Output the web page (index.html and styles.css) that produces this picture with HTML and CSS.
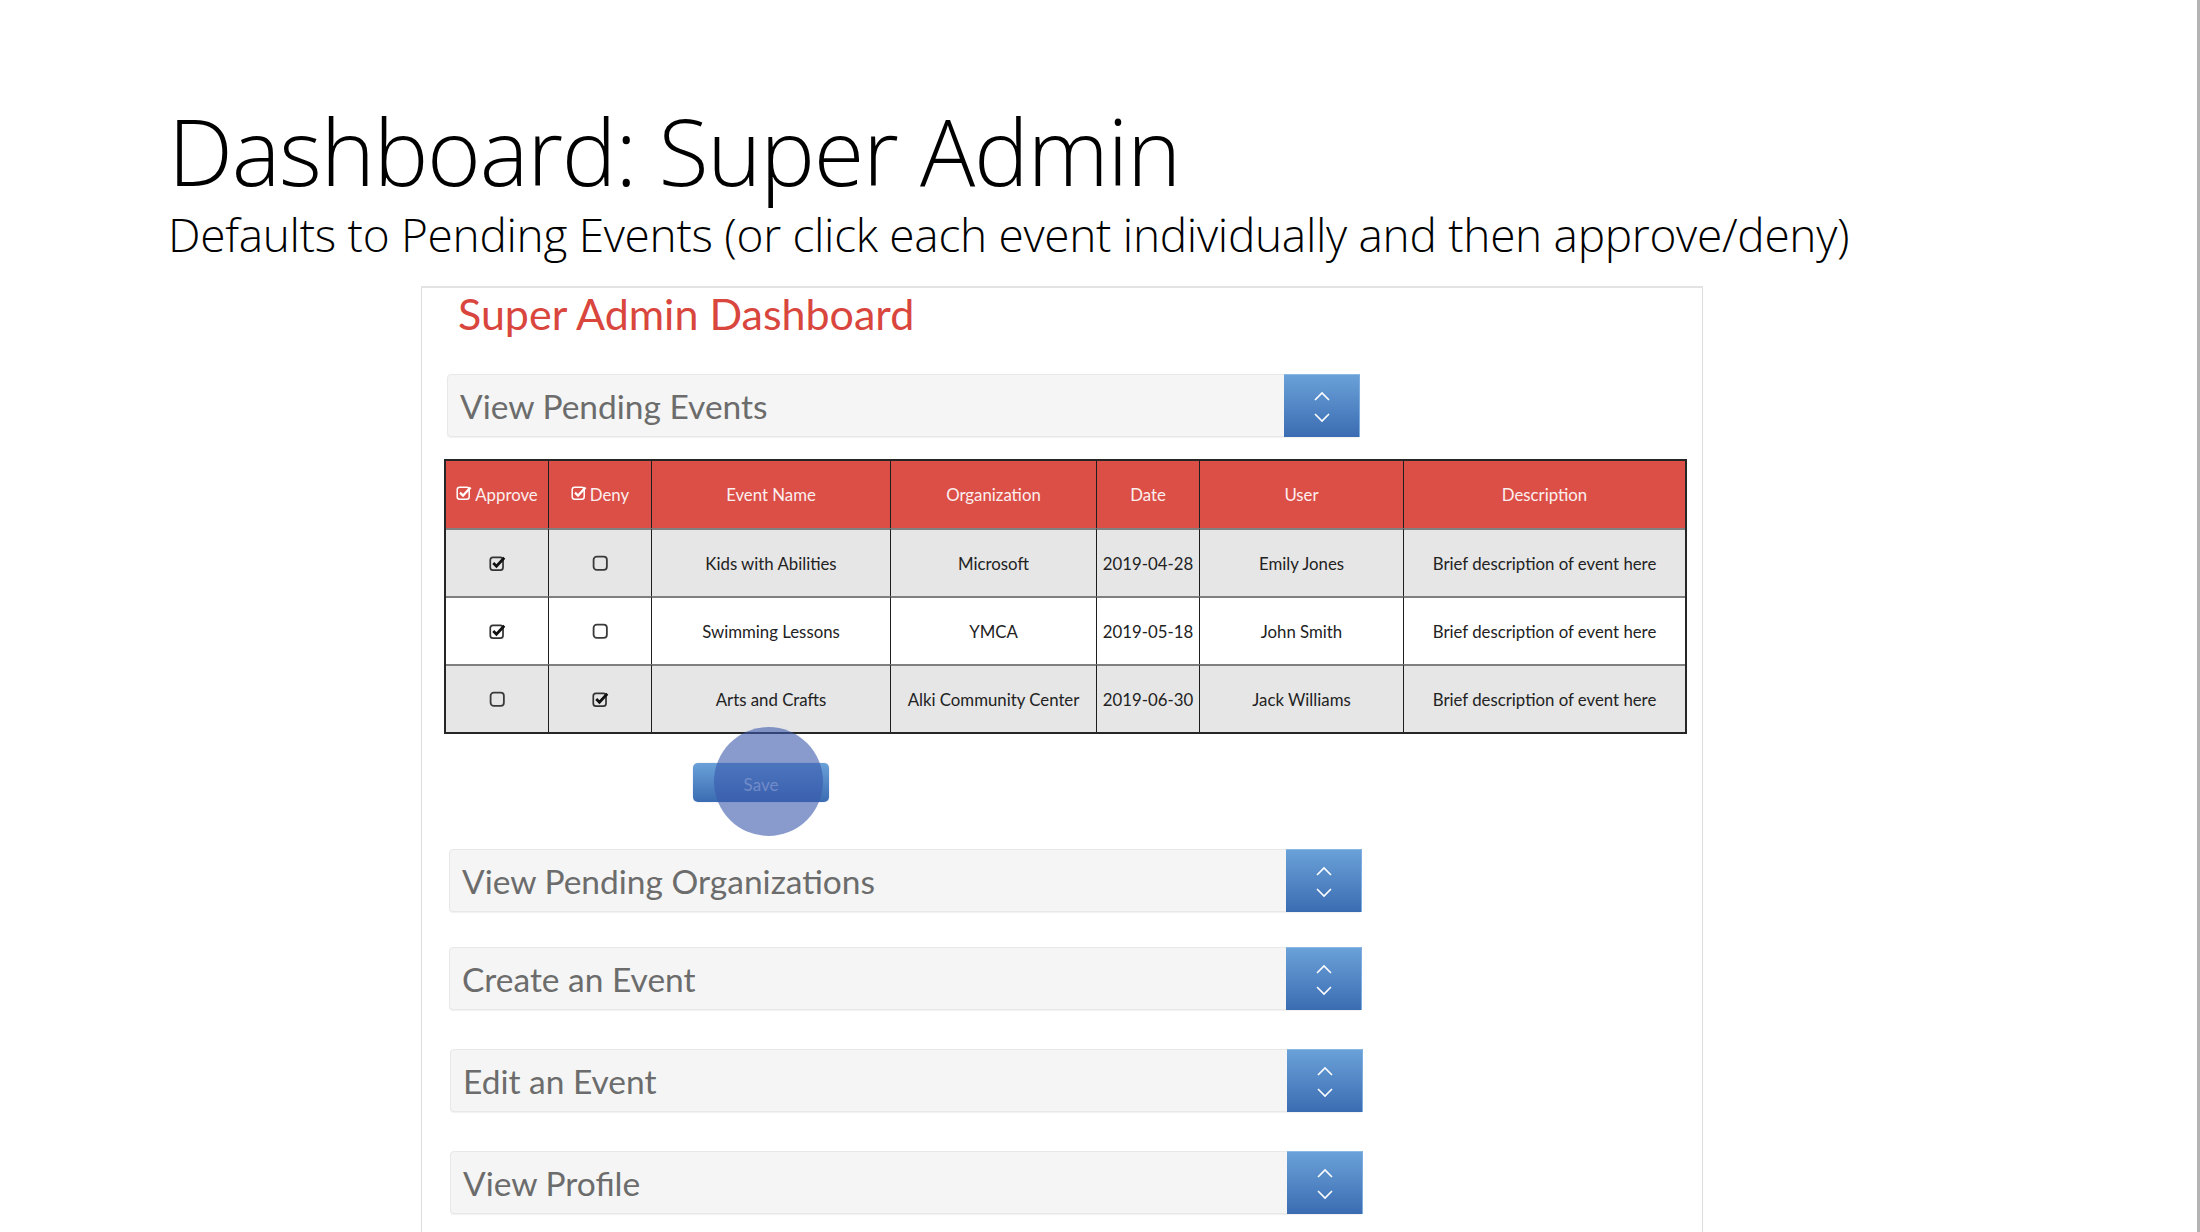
FILE: index.html
```html
<!DOCTYPE html>
<html lang="en">
<head>
<meta charset="utf-8">
<title>Dashboard: Super Admin</title>
<link rel="stylesheet" href="styles.css">
</head>
<body>
<div class="slide">
  <header class="slide-head">
    <h1 class="title">Dashboard: Super Admin</h1>
    <p class="subtitle">Defaults to Pending Events (or click each event individually and then approve/deny)</p>
  </header>

  <section class="panel">
    <h2 class="panel-title">Super Admin Dashboard</h2>

    <div class="dd dd-first">
      <span class="dd-label">View Pending Events</span>
      <span class="dd-btn"><svg viewBox="0 0 20 34" width="20" height="34"><path d="M3 11 L10 4 L17 11" fill="none" stroke="#fff" stroke-width="1.6"/><path d="M3 25 L10 32 L17 25" fill="none" stroke="#fff" stroke-width="1.6"/></svg></span>
    </div>

    <table class="events">
      <thead>
        <tr>
          <th class="c-chk"><span class="hchk"><svg viewBox="0 0 16 16" width="16" height="16"><rect x="1.2" y="2.2" width="12" height="12" rx="2.5" fill="none" stroke="#fff" stroke-width="1.5"/><path d="M4 7.6 L7 10.6 L14.6 2.4" fill="none" stroke="#fff" stroke-width="2.2"/></svg>Approve</span></th>
          <th class="c-chk"><span class="hchk"><svg viewBox="0 0 16 16" width="16" height="16"><rect x="1.2" y="2.2" width="12" height="12" rx="2.5" fill="none" stroke="#fff" stroke-width="1.5"/><path d="M4 7.6 L7 10.6 L14.6 2.4" fill="none" stroke="#fff" stroke-width="2.2"/></svg>Deny</span></th>
          <th class="c-name">Event Name</th>
          <th class="c-org">Organization</th>
          <th class="c-date">Date</th>
          <th class="c-user">User</th>
          <th class="c-desc">Description</th>
        </tr>
      </thead>
      <tbody>
        <tr class="shade">
          <td><svg class="box" viewBox="0 0 16 16" width="17" height="17"><rect x="1.2" y="2.2" width="12" height="12" rx="2.5" fill="none" stroke="#333" stroke-width="1.6"/><path d="M4 7.6 L7 10.6 L14.4 2.6" fill="none" stroke="#111" stroke-width="2.6"/></svg></td>
          <td><svg class="box" viewBox="0 0 16 16" width="17" height="17"><rect x="1.5" y="1.5" width="12.5" height="12.5" rx="3" fill="none" stroke="#3a3a3a" stroke-width="1.7"/></svg></td>
          <td>Kids with Abilities</td>
          <td>Microsoft</td>
          <td>2019-04-28</td>
          <td>Emily Jones</td>
          <td>Brief description of event here</td>
        </tr>
        <tr>
          <td><svg class="box" viewBox="0 0 16 16" width="17" height="17"><rect x="1.2" y="2.2" width="12" height="12" rx="2.5" fill="none" stroke="#333" stroke-width="1.6"/><path d="M4 7.6 L7 10.6 L14.4 2.6" fill="none" stroke="#111" stroke-width="2.6"/></svg></td>
          <td><svg class="box" viewBox="0 0 16 16" width="17" height="17"><rect x="1.5" y="1.5" width="12.5" height="12.5" rx="3" fill="none" stroke="#3a3a3a" stroke-width="1.7"/></svg></td>
          <td>Swimming Lessons</td>
          <td>YMCA</td>
          <td>2019-05-18</td>
          <td>John Smith</td>
          <td>Brief description of event here</td>
        </tr>
        <tr class="shade">
          <td><svg class="box" viewBox="0 0 16 16" width="17" height="17"><rect x="1.5" y="1.5" width="12.5" height="12.5" rx="3" fill="none" stroke="#3a3a3a" stroke-width="1.7"/></svg></td>
          <td><svg class="box" viewBox="0 0 16 16" width="17" height="17"><rect x="1.2" y="2.2" width="12" height="12" rx="2.5" fill="none" stroke="#333" stroke-width="1.6"/><path d="M4 7.6 L7 10.6 L14.4 2.6" fill="none" stroke="#111" stroke-width="2.6"/></svg></td>
          <td>Arts and Crafts</td>
          <td>Alki Community Center</td>
          <td>2019-06-30</td>
          <td>Jack Williams</td>
          <td>Brief description of event here</td>
        </tr>
      </tbody>
    </table>

    <div class="save-row">
      <div class="save-wrap">
        <button class="save" type="button">Save</button>
        <span class="touch"></span>
      </div>
    </div>

    <div class="dd dd-org">
      <span class="dd-label">View Pending Organizations</span>
      <span class="dd-btn"><svg viewBox="0 0 20 34" width="20" height="34"><path d="M3 11 L10 4 L17 11" fill="none" stroke="#fff" stroke-width="1.6"/><path d="M3 25 L10 32 L17 25" fill="none" stroke="#fff" stroke-width="1.6"/></svg></span>
    </div>
    <div class="dd dd-create">
      <span class="dd-label">Create an Event</span>
      <span class="dd-btn"><svg viewBox="0 0 20 34" width="20" height="34"><path d="M3 11 L10 4 L17 11" fill="none" stroke="#fff" stroke-width="1.6"/><path d="M3 25 L10 32 L17 25" fill="none" stroke="#fff" stroke-width="1.6"/></svg></span>
    </div>
    <div class="dd dd-edit">
      <span class="dd-label">Edit an Event</span>
      <span class="dd-btn"><svg viewBox="0 0 20 34" width="20" height="34"><path d="M3 11 L10 4 L17 11" fill="none" stroke="#fff" stroke-width="1.6"/><path d="M3 25 L10 32 L17 25" fill="none" stroke="#fff" stroke-width="1.6"/></svg></span>
    </div>
    <div class="dd dd-profile">
      <span class="dd-label">View Profile</span>
      <span class="dd-btn"><svg viewBox="0 0 20 34" width="20" height="34"><path d="M3 11 L10 4 L17 11" fill="none" stroke="#fff" stroke-width="1.6"/><path d="M3 25 L10 32 L17 25" fill="none" stroke="#fff" stroke-width="1.6"/></svg></span>
    </div>
  </section>
</div>
</body>
</html>
```

FILE: styles.css
```css
* { box-sizing: border-box; }

html, body {
  margin: 0;
  padding: 0;
  background: #ffffff;
}

.slide {
  width: 2200px;
  height: 1232px;
  overflow: hidden;
  display: flex;
  flex-direction: column;
  border-right: 3px solid #b3b3b3;
  background: #ffffff;
}

.slide-head {
  padding: 105px 0 0 168px;
  font-family: "Open Sans", "Noto Sans", sans-serif;
  color: #000;
}

.title {
  margin: 0;
  font-size: 92px;
  font-weight: 300;
  line-height: 92px;
  letter-spacing: -1.3px;
}

.subtitle {
  margin: 14px 0 0 0;
  font-size: 46px;
  font-weight: 300;
  line-height: 46px;
  letter-spacing: -0.3px;
}

.panel {
  flex: 1;
  margin: 29px 0 0 421px;
  width: 1282px;
  border-top: 2px solid #e3e3e3;
  border-left: 1px solid #dcdcdc;
  border-right: 1px solid #dcdcdc;
  font-family: "Lato", "Open Sans", sans-serif;
  display: flex;
  flex-direction: column;
  align-items: flex-start;
}

.panel-title {
  margin: 1px 0 0 36px;
  font-size: 43px;
  font-weight: 400;
  line-height: 50px;
  color: #d9463d;
}

.dd {
  display: flex;
  align-items: stretch;
  width: 913px;
  height: 63px;
  background: #f4f5f4;
  border: 1px solid #e7e8e7;
  border-radius: 4px;
  box-shadow: 0 1px 1px rgba(0,0,0,0.06);
}

.dd-first { margin: 35px 0 0 25px; }
.dd-org { margin: 47px 0 0 27px; }
.dd-create { margin: 35px 0 0 27px; }
.dd-edit { margin: 39px 0 0 28px; }
.dd-profile { margin: 39px 0 0 28px; }

.dd-label {
  flex: 1;
  display: flex;
  align-items: center;
  padding-left: 12px;
  font-size: 33.5px;
  color: #6c6c6c;
}

.dd-btn {
  width: 76px;
  display: flex;
  align-items: center;
  justify-content: center;
  margin: -1px -1px -1px 0;
  background: linear-gradient(#6aa1d8, #3b6cb2);
  border-top: 1px solid #8bb8e4;
  border-right: 1px solid #7eaee0;
}

.events {
  margin: 22px 0 0 22px;
  width: 1243px;
  border-collapse: separate;
  border-spacing: 0;
  border: 2px solid #262626;
  table-layout: fixed;
  font-size: 16.8px;
  color: #222;
}

.events th,
.events td {
  text-align: center;
  vertical-align: middle;
  border-right: 1.5px solid #1e1e1e;
  padding: 0;
}

.events th:last-child,
.events td:last-child { border-right: none; }

.events th {
  height: 67px;
  background: #db4f46;
  color: #fbeeee;
  font-weight: 400;
}

.events td {
  height: 68px;
  border-top: 2px solid #808080;
  background: #ffffff;
}

.events tr.shade td { background: #e6e6e6; }

.c-chk { width: 103px; }
.c-name { width: 239px; }
.c-org { width: 206px; }
.c-date { width: 103px; }
.c-user { width: 204px; }

.hchk {
  display: inline-flex;
  align-items: center;
  gap: 3px;
}

.hchk svg { margin-top: -2px; }

.box { display: block; margin: 0 auto; }

.save-row {
  margin: 29px 0 0 271px;
}

.save-wrap {
  position: relative;
  width: 136px;
  height: 39px;
}

.save {
  width: 136px;
  height: 39px;
  border: none;
  border-radius: 5px;
  background: linear-gradient(#6aa1d8, #3b6cb2);
  box-shadow: 0 0 1px rgba(40,80,150,0.6);
  color: #c2d6f2;
  font-family: "Lato", sans-serif;
  font-size: 17px;
  padding: 4px 0 0 0;
}

.touch {
  position: absolute;
  left: 21px;
  top: -36px;
  width: 109px;
  height: 109px;
  border-radius: 50%;
  background: rgba(58, 88, 172, 0.6);
}
```
